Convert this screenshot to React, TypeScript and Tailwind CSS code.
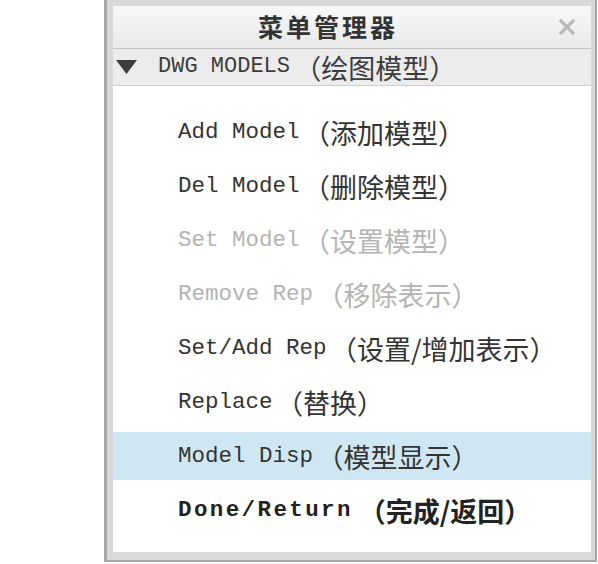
import React from "react";

const mono = { fontFamily: '"Liberation Mono", "DejaVu Sans Mono", monospace' };
const cjk = { fontFamily: '"Noto Sans CJK SC", "Noto Sans", sans-serif' };

type Item = { en: string; zh: string; state: "normal" | "disabled" | "active" | "bold" };

const items: Item[] = [
  { en: "Add Model", zh: "（添加模型）", state: "normal" },
  { en: "Del Model", zh: "（删除模型）", state: "normal" },
  { en: "Set Model", zh: "（设置模型）", state: "disabled" },
  { en: "Remove Rep", zh: "（移除表示）", state: "disabled" },
  { en: "Set/Add Rep", zh: "（设置/增加表示）", state: "normal" },
  { en: "Replace", zh: "（替换）", state: "normal" },
  { en: "Model Disp", zh: "（模型显示）", state: "active" },
  { en: "Done/Return", zh: "（完成/返回）", state: "bold" },
];

function Row({ item }: { item: Item }) {
  const color =
    item.state === "disabled" ? "text-[#b4b4b4]" : item.state === "bold" ? "text-[#222222]" : "text-[#333333]";
  const bg = item.state === "active" ? "bg-[#cfe7f3]" : "";
  const bold = item.state === "bold";
  return (
    <div className={`flex h-[48px] items-center pl-[65px] ${bg} ${color}`}>
      <span
        style={mono}
        className={`whitespace-pre text-[22.5px] leading-none ${bold ? "font-bold tracking-[2.4px]" : ""}`}
      >
        {item.en + " "}
      </span>
      <span
        style={cjk}
        className={`-ml-[10px] whitespace-pre text-[27px] leading-none ${bold ? "font-bold" : ""}`}
      >
        {item.zh}
      </span>
    </div>
  );
}

export default function App() {
  return (
    <div className="h-[564px] w-[598px] bg-white">
      <div className="ml-[104px] flex h-[562px] w-[493px] flex-col border-b-[2px] border-l-[3px] border-r-[2px] border-[#a8a8a8] bg-[#d9d9d9] pb-[8px] pl-[6px] pr-[4px] pt-[6px]">
        {/* title bar */}
        <div className="flex h-[42px] shrink-0 items-center bg-gradient-to-b from-[#f8f8f8] to-[#e9e9e9]">
          <div
            style={cjk}
            className="flex-1 text-center text-[25px] font-bold tracking-[3px] text-[#333333]"
          >
            菜单管理器
          </div>
          <div className="flex w-[48px] items-center justify-center">
            <svg width="18" height="16" viewBox="0 0 18 16">
              <path d="M3 2 L15 14 M15 2 L3 14" stroke="#b9b9b9" strokeWidth="3.2" strokeLinecap="square" />
            </svg>
          </div>
        </div>
        {/* section header */}
        <div className="flex h-[38px] shrink-0 items-center border-b border-t border-b-[#cfcfcf] border-t-[#c4c4c4] bg-[#ececec] text-[#3c3c3c]">
          <svg className="ml-[3px]" width="21" height="14" viewBox="0 0 21 14">
            <path d="M0 0 H21 L10.5 14 Z" fill="#3d3d3d" />
          </svg>
          <span style={mono} className="ml-[21px] whitespace-pre text-[22px] leading-none">
            {"DWG MODELS "}
          </span>
          <span style={cjk} className="-ml-[9px] whitespace-pre text-[27px] leading-none">
            （绘图模型）
          </span>
        </div>
        {/* menu */}
        <div className="flex flex-1 flex-col gap-[6px] bg-white pt-[22px]">
          {items.map((it) => (
            <Row key={it.en} item={it} />
          ))}
        </div>
      </div>
    </div>
  );
}
